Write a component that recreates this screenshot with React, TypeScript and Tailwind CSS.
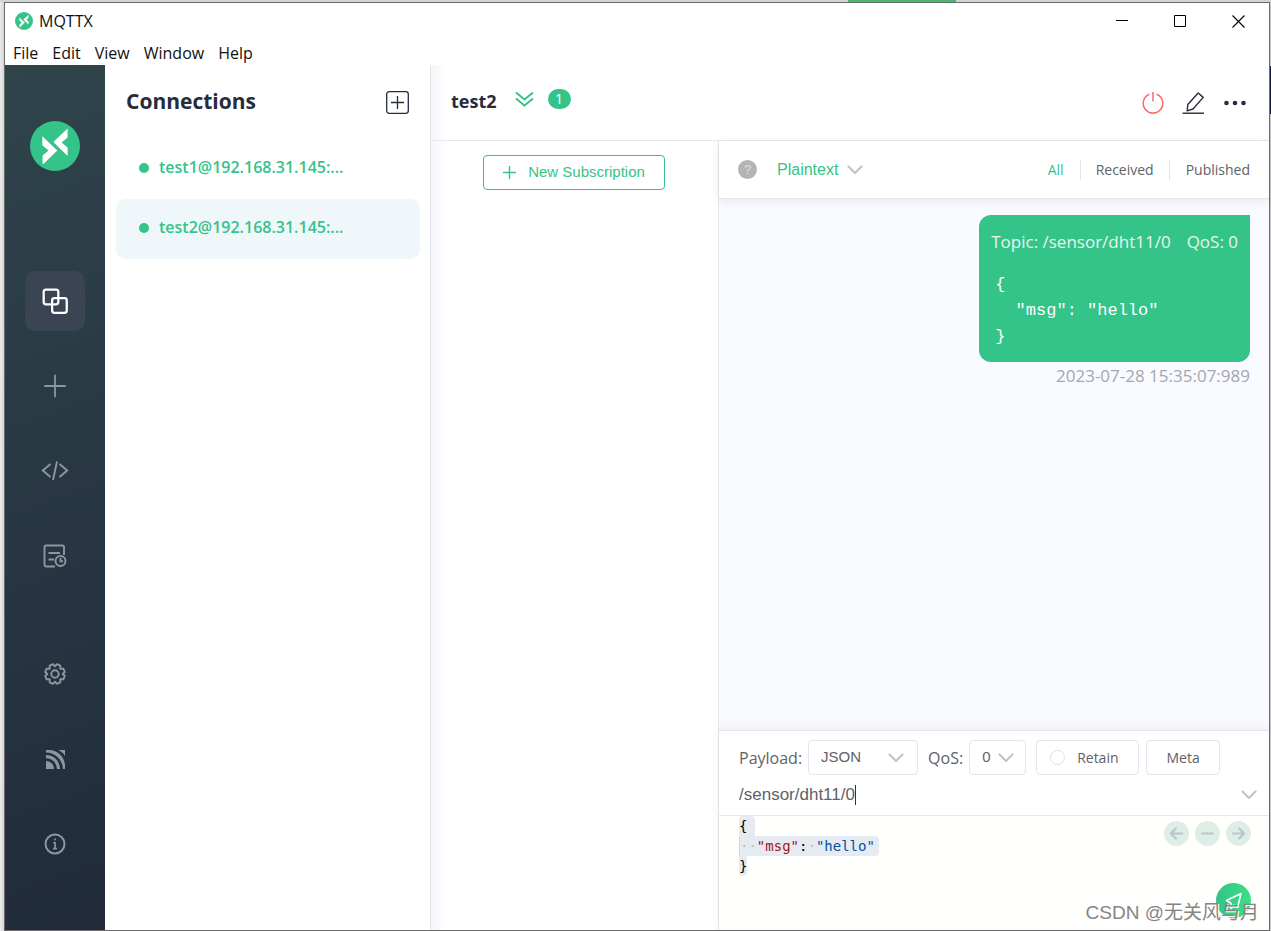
import type { ReactNode } from "react";
import { useState } from "react";
import clsx from "clsx";

const UI = "font-['Open_Sans','Noto_Sans',sans-serif]";
const ARIAL = "font-['Liberation_Sans',sans-serif]";

const connections = [
  { id: "test1", label: "test1@192.168.31.145:..." },
  { id: "test2", label: "test2@192.168.31.145:..." },
];

function Logo({ className }: { className: string }) {
  return (
    <svg viewBox="0 0 50 50" className={className} aria-hidden="true">
      <circle cx="25" cy="25" r="25" fill="#34c388" />
      <path d="M12.3 15.3 L27.3 29.5 L13.2 43.2 L12.6 42.6 V34.5 L18.6 29.5 L12.3 24.2 Z" fill="#fff" />
      <path d="M37.6 7.6 L23.4 20.9 L37.6 35 V26.6 L31.6 21.4 L37.6 16.6 Z" fill="#fff" />
    </svg>
  );
}

function Icon({ size, children, width = 1.5 }: { size: number; children: ReactNode; width?: number }) {
  return (
    <svg
      width={size}
      height={size}
      viewBox="0 0 24 24"
      fill="none"
      stroke="currentColor"
      strokeWidth={width}
      strokeLinecap="round"
      strokeLinejoin="round"
      aria-hidden="true"
    >
      {children}
    </svg>
  );
}

function Chevron() {
  return (
    <svg width="16" height="10" viewBox="0 0 16 10" fill="none" stroke="#c0c4cc" strokeWidth="2.2" aria-hidden="true">
      <path d="M1.5 1.5 L8 8 L14.5 1.5" strokeLinecap="round" strokeLinejoin="round" />
    </svg>
  );
}

function SideButton({ label, active, children }: { label: string; active?: boolean; children: ReactNode }) {
  return (
    <button
      type="button"
      aria-label={label}
      className={clsx(
        "flex size-15 items-center justify-center rounded-[10px]",
        active ? "bg-[#3b4453] text-white" : "text-[#8c989f]",
      )}
    >
      {children}
    </button>
  );
}

function TitleBar() {
  return (
    <header className={clsx("text-[#111]", UI)}>
      <div className="flex h-9 items-center pr-0.5 pl-2.5">
        <Logo className="size-4.5" />
        <span className="ml-1.5 flex-1 text-base">MQTTX</span>
        <button type="button" aria-label="Minimize" className="flex h-9 w-[58px] items-center justify-center">
          <svg width="13" height="13" viewBox="0 0 13 13" stroke="#000">
            <path d="M0 5.5 H12" />
          </svg>
        </button>
        <button type="button" aria-label="Maximize" className="flex h-9 w-[58px] items-center justify-center">
          <svg width="13" height="13" viewBox="0 0 13 13" fill="none" stroke="#000">
            <path d="M0.5 0.5 H11.5 V11.5 H0.5 Z" />
          </svg>
        </button>
        <button type="button" aria-label="Close" className="flex h-9 w-[58px] items-center justify-center">
          <svg width="13" height="13" viewBox="0 0 13 13" stroke="#000" strokeWidth="1.1">
            <path d="M0.5 0.5 L12.5 12.5 M12.5 0.5 L0.5 12.5" />
          </svg>
        </button>
      </div>
      <nav className="flex h-[26px] items-center gap-3.5 pt-0.5 pl-2 text-base">
        {["File", "Edit", "View", "Window", "Help"].map((item) => (
          <button key={item} type="button">
            {item}
          </button>
        ))}
      </nav>
    </header>
  );
}

function Sidebar() {
  return (
    <aside className="flex w-25 shrink-0 flex-col items-center bg-linear-160 from-[#2f444b] to-[#212b3b] py-14">
      <Logo className="size-12.5" />
      <div className="mt-25 flex flex-col gap-[25px]">
        <SideButton label="Connections" active>
          <Icon size={27} width={2}>
            <rect x="1.5" y="1.5" width="13" height="13" rx="2" />
            <rect x="9" y="9" width="13" height="13" rx="2" />
          </Icon>
        </SideButton>
        <SideButton label="New connection">
          <Icon size={24} width={1.8}>
            <path d="M2 12 H22 M12 1.5 V22.5" />
          </Icon>
        </SideButton>
        <SideButton label="Script">
          <svg width="28" height="22" viewBox="0 0 28 22" fill="none" stroke="currentColor" strokeWidth="1.9" aria-hidden="true">
            <path d="M9.5 4 L1.8 10.5 L9.5 17 M18.5 4 L26.2 10.5 L18.5 17 M16 1.5 L12 20" />
          </svg>
        </SideButton>
        <SideButton label="Log">
          <svg width="24" height="24" viewBox="0 0 24 24" fill="none" stroke="currentColor" strokeWidth="1.9" aria-hidden="true">
            <path d="M21 11 V3 Q21 1.5 19.5 1.5 H3 Q1.5 1.5 1.5 3 V21 Q1.5 22.5 3 22.5 H12 M5.5 9 H17 M5.5 15.5 H11" />
            <circle cx="17.5" cy="17" r="5" />
            <path d="M17.5 14 V17.3 H20" />
          </svg>
        </SideButton>
      </div>
      <div className="mt-auto flex flex-col gap-[25px]">
        <SideButton label="Settings">
          <Icon size={24} width={1.9}>
            <path d="M10 2.2 L12 4.3 L14 2.2 L17.3 3.6 L17.3 6.7 L20.4 6.7 L21.8 10 L19.7 12 L21.8 14 L20.4 17.3 L17.3 17.3 L17.3 20.4 L14 21.8 L12 19.7 L10 21.8 L6.7 20.4 L6.7 17.3 L3.6 17.3 L2.2 14 L4.3 12 L2.2 10 L3.6 6.7 L6.7 6.7 L6.7 3.6 Z" />
            <circle cx="12" cy="12" r="3.7" />
          </Icon>
        </SideButton>
        <SideButton label="Feed">
          <svg width="19" height="19" viewBox="0 0 19 19" fill="currentColor" aria-hidden="true">
            <path d="M0 11 A8 8 0 0 1 8 19 H0 Z" />
            <path d="M0 5 A14 14 0 0 1 14 19 H11 A11 11 0 0 0 0 8.2 Z" />
            <path d="M0 0 H3 A16 16 0 0 1 19 16 V19 H17 A17 17 0 0 0 0 2.6 Z" />
            <path d="M12.5 0 H19 V6 Q16.5 2 12.5 0 Z" />
          </svg>
        </SideButton>
        <SideButton label="About">
          <Icon size={24} width={2}>
            <circle cx="12" cy="12" r="9.5" />
            <path d="M12 10.5 V16.5 M11 10.5 H12 M10.8 16.7 H13.2 M12 7.2 V7.4" strokeWidth="1.7" />
          </Icon>
        </SideButton>
      </div>
    </aside>
  );
}

function ConnectionList() {
  const [current, setCurrent] = useState("test2");

  return (
    <section className={clsx("w-[326px] shrink-0 border-r border-[#e3e5ef] bg-white pr-2.5 pl-[11px]", UI)}>
      <div className="flex h-[74px] items-center justify-between pr-[11px] pl-2.5">
        <h1 className="text-[21px] font-bold text-[#252c3d]">Connections</h1>
        <button type="button" aria-label="Add connection" className="text-[#252c3d]">
          <svg width="23" height="23" viewBox="0 0 23 23" fill="none" stroke="currentColor" strokeWidth="1.3">
            <rect x="0.7" y="0.7" width="21.6" height="21.6" rx="2.5" />
            <path d="M5 11.5 H18 M11.5 5 V18" />
          </svg>
        </button>
      </div>
      <ul>
        {connections.map((c) => (
          <li key={c.id}>
            <button
              type="button"
              onClick={() => setCurrent(c.id)}
              className={clsx(
                "flex h-15 w-full items-center gap-2.5 rounded-[10px] pb-1 pl-[23px] text-base font-semibold text-[#34c388]",
                current === c.id && "bg-[#eff7fb]",
              )}
            >
              <span className="mt-0.5 size-2.5 rounded-full bg-[#34c388]" />
              {c.label}
            </button>
          </li>
        ))}
      </ul>
    </section>
  );
}

function MainHeader() {
  return (
    <div className="flex h-[76px] items-center border-b border-[#e6e8f1] pr-[22px] pb-1 pl-5">
      <h2 className={clsx("text-lg font-bold text-[#252c3d]", UI)}>test2</h2>
      <div className="ml-[18px] flex items-center gap-3.5 pb-1">
        <button type="button" aria-label="Collapse">
          <svg width="19" height="16" viewBox="0 0 19 16" fill="none" stroke="#34c388" strokeWidth="2">
            <path d="M1 1.5 L9.5 8.5 L18 1.5 M1 7.5 L9.5 14.5 L18 7.5" />
          </svg>
        </button>
        <span className={clsx("flex h-5 w-[23px] items-center justify-center rounded-full bg-[#34c388] text-[15px] text-white", UI)}>
          1
        </span>
      </div>
      <div className="ml-auto flex items-center gap-[18px] pt-1 text-[#252c3d]">
        <button type="button" aria-label="Disconnect" className="text-[#f56c6c]">
          <svg width="22" height="22" viewBox="0 0 22 22" fill="none" stroke="currentColor" strokeWidth="1.5">
            <path d="M7.3 2.2 A9.8 9.8 0 1 0 14.7 2.2 M11 0 V9.5" />
          </svg>
        </button>
        <button type="button" aria-label="Edit">
          <svg width="23" height="22" viewBox="0 0 23 22" fill="none" stroke="currentColor" strokeWidth="1.4">
            <path d="M0.5 21.2 H22" />
            <path d="M5.2 18.8 L5.8 12.5 L16.2 1 L21.2 5.4 L11 17 Z" strokeLinejoin="round" />
          </svg>
        </button>
        <button type="button" aria-label="More">
          <svg width="24" height="6" viewBox="0 0 24 6" fill="currentColor">
            <circle cx="3.5" cy="3" r="2.3" />
            <circle cx="12" cy="3" r="2.3" />
            <circle cx="20.5" cy="3" r="2.3" />
          </svg>
        </button>
      </div>
    </div>
  );
}

function MessageToolbar() {
  return (
    <div className="z-10 flex h-[58px] items-center border-b border-[#e6e8f1] bg-white px-[19px] shadow-[0_2px_10px_rgba(0,0,0,0.08)]">
      <span className={clsx("flex size-[19px] items-center justify-center rounded-full bg-[#b4b4b4] text-[13px] text-[#dedede]", ARIAL)}>
        ?
      </span>
      <div className="relative ml-5 flex items-center">
        <select aria-label="Format" className={clsx("h-8 w-[86px] appearance-none text-base text-[#34c388]", ARIAL)}>
          <option>Plaintext</option>
        </select>
        <span className="pointer-events-none absolute right-0">
          <Chevron />
        </span>
      </div>
      <div className={clsx("ml-auto flex items-center divide-x divide-[#dfe2ee] text-sm text-[#606266]", UI)}>
        <button type="button" className="pr-4 text-[#34c388]">
          All
        </button>
        <button type="button" className="px-[15px]">
          Received
        </button>
        <button type="button" className="pl-4">
          Published
        </button>
      </div>
    </div>
  );
}

function Messages() {
  return (
    <div className="flex flex-1 flex-col items-end bg-[#f9faff] px-[19px] pt-4">
      <div className="rounded-xl rounded-tr-none bg-[#34c388] p-3 text-white">
        <p className={clsx("flex gap-4 text-[17px] leading-[30px] text-[#e4f8ee]", UI)}>
          <span>Topic: /sensor/dht11/0</span>
          <span>QoS: 0</span>
        </p>
        <pre className="mt-[15px] pl-1 font-['Liberation_Mono',monospace] text-[17px] leading-[26px]">
          {'{\n  "msg": "hello"\n}'}
        </pre>
      </div>
      <time className={clsx("text-[17px] leading-7 text-[#a3a7b0]", UI)}>2023-07-28 15:35:07:989</time>
    </div>
  );
}

function PublishForm() {
  const [retain, setRetain] = useState(false);
  const [topic, setTopic] = useState("/sensor/dht11/0");
  const box = "h-[35px] rounded border border-[#e3e5ef] bg-white text-[#606266]";

  return (
    <form className="border-b border-[#e6e8f1] bg-white pt-[9px] pr-3 pl-5">
      <div className="flex items-center">
        <label htmlFor="payload" className={clsx("text-base text-[#606266]", UI)}>
          Payload:
        </label>
        <div className="relative ml-1.5 flex items-center">
          <select id="payload" className={clsx(box, "w-[110px] appearance-none pl-3 text-[15px]", ARIAL)}>
            <option>JSON</option>
          </select>
          <span className="pointer-events-none absolute right-3.5">
            <Chevron />
          </span>
        </div>
        <label htmlFor="qos" className={clsx("ml-2.5 text-base text-[#606266]", UI)}>
          QoS:
        </label>
        <div className="relative ml-1.5 flex items-center">
          <select id="qos" className={clsx(box, "w-[57px] appearance-none pl-3 text-[15px]", ARIAL)}>
            <option>0</option>
            <option>1</option>
            <option>2</option>
          </select>
          <span className="pointer-events-none absolute right-3">
            <Chevron />
          </span>
        </div>
        <label className={clsx(box, "ml-2.5 flex w-[103px] items-center gap-3 pl-[13px] text-sm", UI)}>
          <input
            type="checkbox"
            checked={retain}
            onChange={(e) => setRetain(e.target.checked)}
            className="size-[15px] appearance-none rounded-full border border-[#dcdfe6] checked:bg-[#34c388]"
          />
          Retain
        </label>
        <button type="button" className={clsx(box, "ml-[7px] w-[74px] text-sm", UI)}>
          Meta
        </button>
      </div>
      <div className="flex h-10 items-center">
        <input
          aria-label="Topic"
          value={topic}
          onChange={(e) => setTopic(e.target.value)}
          className={clsx("field-sizing-content text-[17px] text-[#606266] outline-none", ARIAL)}
        />
        <span className="h-5 w-px bg-[#333]" />
        <button type="button" aria-label="Collapse editor" className="ml-auto">
          <Chevron />
        </button>
      </div>
    </form>
  );
}

function RoundButton({ label, children }: { label: string; children: ReactNode }) {
  return (
    <button type="button" aria-label={label} className="flex size-[25px] items-center justify-center rounded-full bg-[#deeee7] text-[#bcc4cb]">
      <Icon size={15} width={3.4}>
        {children}
      </Icon>
    </button>
  );
}

function Editor() {
  return (
    <div className="flex h-[114px] justify-between bg-[#fffffd] pr-[18px] pl-5">
      <pre className="font-['DejaVu_Sans_Mono',monospace] text-sm leading-5 text-black">
        <span className="block w-4 rounded-t bg-[#e5ebf1]">{"{"}</span>
        <span className="block rounded-r border-l border-[#d3d3d3] bg-[#e5ebf1] pr-1">
          <span className="text-[#b9c0c8]">··</span>
          <span className="text-[#a31515]">"msg"</span>:<span className="text-[#b9c0c8]">·</span>
          <span className="text-[#0451a5]">"hello"</span>
        </span>
        <span className="block w-2 rounded-b bg-[#e5ebf1]">{"}"}</span>
      </pre>
      <div className="flex flex-col items-end justify-between pt-[5px] pb-3">
        <div className="flex gap-1.5">
          <RoundButton label="Previous">
            <path d="M21 12 H4 M11 4 L3 12 L11 20" />
          </RoundButton>
          <RoundButton label="Clear">
            <path d="M3 12 H21" />
          </RoundButton>
          <RoundButton label="Next">
            <path d="M3 12 H20 M13 4 L21 12 L13 20" />
          </RoundButton>
        </div>
        <button
          type="button"
          aria-label="Send"
          className="flex size-[35px] items-center justify-center rounded-full bg-linear-to-r from-[#34c388] to-[#3ae083]"
        >
          <svg width="20" height="20" viewBox="0 0 20 20" fill="none" stroke="#fff" strokeWidth="1.6" strokeLinejoin="round">
            <path d="M17 2.5 L2.5 9.5 L7 12.2 V17.5 L9.8 14.2 L13.5 16.5 Z" />
          </svg>
        </button>
      </div>
    </div>
  );
}

export default function App() {
  return (
    <div className="relative flex min-h-screen flex-col bg-[#d2d2d2]">
      <div className="flex h-0.5">
        <div className="ml-[848px] w-[108px] bg-[#45b967]" />
      </div>
      <div className="flex flex-1">
        <div className="w-1 bg-linear-to-r from-[#ececec] to-[#d5d5d5]" />
        <div className="flex min-w-0 flex-1 flex-col border border-[#6b6b6b] bg-white">
          <TitleBar />
          <div className="flex flex-1">
            <Sidebar />
            <ConnectionList />
            <main className="flex min-w-0 flex-1 flex-col bg-linear-to-r from-[#f4f5fa] to-white to-[14px]">
              <MainHeader />
              <div className="flex flex-1">
                <section className="w-[288px] shrink-0 border-r border-[#e3e5ef] px-13 pt-3.5">
                  <button
                    type="button"
                    className={clsx(
                      "flex h-[35px] w-[182px] items-center justify-center gap-3 rounded border border-[#34c388] bg-white text-[15px] text-[#34c388]",
                      ARIAL,
                    )}
                  >
                    <svg width="13" height="13" viewBox="0 0 13 13" stroke="currentColor" strokeWidth="1.4" aria-hidden="true">
                      <path d="M0 6.5 H13 M6.5 0 V13" />
                    </svg>
                    New Subscription
                  </button>
                </section>
                <section className="flex min-w-0 flex-1 flex-col">
                  <MessageToolbar />
                  <Messages />
                  <div className="border-t border-[#e3e5ef] shadow-[0_-2px_10px_rgba(0,0,0,0.06)]">
                    <PublishForm />
                    <Editor />
                  </div>
                </section>
              </div>
            </main>
          </div>
        </div>
        <div className="w-px bg-[#c9c9c9] pt-16">
          <div className="h-12 bg-[#1c1a3a]" />
        </div>
      </div>
      <p className="pointer-events-none absolute right-3 bottom-1 font-['Liberation_Sans','Noto_Sans_CJK_SC',sans-serif] text-[19px] leading-7 text-[#858585] [text-shadow:1px_1px_0_#fff]">
        CSDN @无关风与月
      </p>
    </div>
  );
}
